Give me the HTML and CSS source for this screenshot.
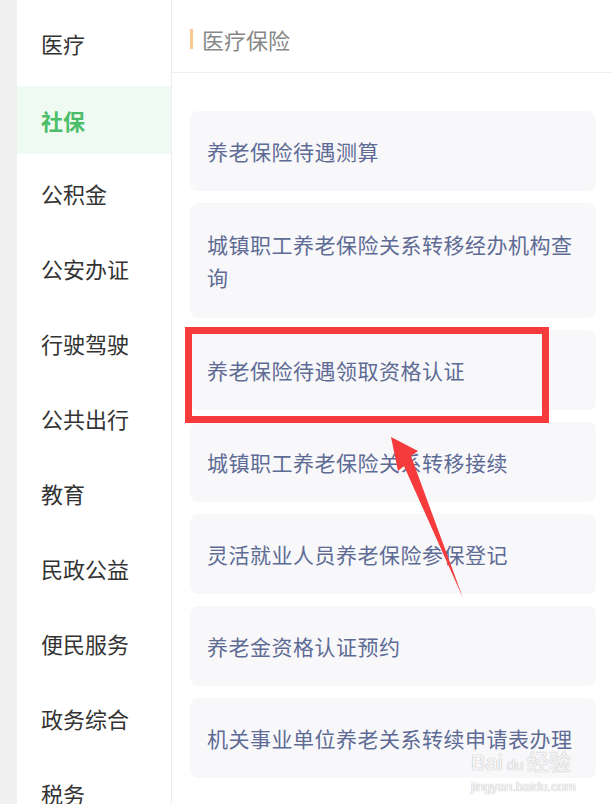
FILE: index.html
```html
<!DOCTYPE html>
<html lang="zh-CN">
<head>
    <meta charset="UTF-8">
    <meta name="viewport" content="width=device-width, initial-scale=1.0">
    <title>社保</title>
    <link rel="stylesheet" href="styles.css">
</head>
<body>
    <div class="page">
        <div class="strip"></div>
        <div class="sidebar">
            <div class="nav-item">医疗</div>
            <div class="nav-item active">社保</div>
            <div class="nav-item">公积金</div>
            <div class="nav-item">公安办证</div>
            <div class="nav-item">行驶驾驶</div>
            <div class="nav-item">公共出行</div>
            <div class="nav-item">教育</div>
            <div class="nav-item">民政公益</div>
            <div class="nav-item">便民服务</div>
            <div class="nav-item">政务综合</div>
            <div class="nav-item">税务</div>
        </div>
        <div class="content">
            <div class="section-title"><span class="bar"></span>医疗保险</div>
            <div class="list">
                <div class="card">养老保险待遇测算</div>
                <div class="card">城镇职工养老保险关系转移经办机构查询</div>
                <div class="card">养老保险待遇领取资格认证</div>
                <div class="card">城镇职工养老保险关系转移接续</div>
                <div class="card">灵活就业人员养老保险参保登记</div>
                <div class="card">养老金资格认证预约</div>
                <div class="card">机关事业单位养老关系转续申请表办理</div>
            </div>
        </div>

        <!-- 标注 -->
        <div class="mark-box"></div>
        <svg class="mark-arrow" width="612" height="804" viewBox="0 0 612 804">
            <polygon points="391,437 418,451 411,456 463,598 404,466 398,471" fill="#f53b3b"/>
        </svg>
        <div class="watermark">
            <div class="wm-logo">Bai<span class="wm-du">du</span>经验</div>
            <div class="wm-url">jingyan.baidu.com</div>
        </div>
    </div>
</body>
</html>
```

FILE: styles.css
```css
body {
    margin: 0;
    background-color: white;
    font-family: "Noto Sans CJK SC", "Noto Sans", sans-serif;
}

.page {
    position: relative;
    display: flex;
    width: 612px;
    height: 804px;
    overflow: hidden;
}

.strip {
    width: 17px;
    background-color: #f0f0f0;
}

.sidebar {
    width: 154px;
    padding-top: 9px;
    border-right: 1px solid #ededed;
    display: flex;
    flex-direction: column;
    gap: 7px;
}

.nav-item {
    height: 68px;
    line-height: 68px;
    padding-left: 24px;
    font-size: 22px;
    color: #333;
    flex-shrink: 0;
}

.nav-item.active {
    background-color: #effaf3;
    color: #4cbd68;
    font-weight: bold;
    margin-top: 2px;
    margin-bottom: -2px;
}

.content {
    flex: 1;
}

.section-title {
    height: 73px;
    border-bottom: 1px solid #eef0ee;
    display: flex;
    align-items: center;
    padding-left: 18px;
    padding-top: 6px;
    box-sizing: border-box;
    font-size: 22px;
    color: #888;
}

.bar {
    width: 3px;
    height: 20px;
    background-color: #f7c890;
    margin-right: 9px;
}

.list {
    padding: 38px 16px 0 18px;
    display: flex;
    flex-direction: column;
    gap: 12px;
}

.card {
    background-color: #f8f8fb;
    border-radius: 8px;
    padding: 23.5px 17px;
    font-size: 21px;
    letter-spacing: 0.5px;
    line-height: 33px;
    color: #5e6b94;
}

.card:nth-child(2) {
    padding-top: 24.5px;
    padding-bottom: 24.5px;
}

.mark-box {
    position: absolute;
    left: 185px;
    top: 327px;
    width: 350px;
    height: 82px;
    border: 7px solid #f53b3b;
}

.mark-arrow {
    position: absolute;
    left: 0;
    top: 0;
}

.watermark {
    position: absolute;
    left: 471px;
    top: 752px;
    color: rgba(255, 255, 255, 0.9);
    text-shadow: 0 0 1px #bbb, 0 0 1px #bbb;
    font-family: "Liberation Sans", sans-serif;
}

.wm-logo {
    font-size: 22px;
    line-height: 22px;
}

.wm-du {
    font-size: 15px;
    margin: 0 4px;
}

.wm-url {
    font-size: 13px;
    line-height: 22px;
}
```
